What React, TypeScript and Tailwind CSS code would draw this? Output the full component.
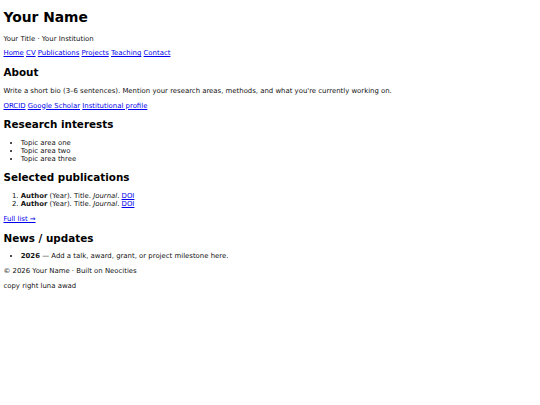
export default function App() {
  const links = ["Home", "CV", "Publications", "Projects", "Teaching", "Contact"];
  const profiles = ["ORCID", "Google Scholar", "Institutional profile"];
  const topics = ["Topic area one", "Topic area two", "Topic area three"];

  return (
    <div className="m-[3.46px] font-['DejaVu_Sans',sans-serif] text-[6.92px] leading-[normal] text-[#111] bg-white">
      <header>
        <h1 className="text-[13.84px] font-bold my-[9.27px] text-black">Your Name</h1>
        <p className="my-[6.92px]">Your Title · Your Institution</p>
        <nav className="my-[6.92px]">
          {links.map((l, i) => (
            <span key={l}>
              <a href="#" className="text-[#0000ee] underline">{l}</a>
              {i < links.length - 1 ? " " : ""}
            </span>
          ))}
        </nav>
      </header>

      <main>
        {/* About */}
        <section>
          <h2 className="text-[10.38px] font-bold my-[8.62px] text-black">About</h2>
          <p className="my-[6.92px]">
            Write a short bio (3–6 sentences). Mention your research areas, methods, and what you're currently working on.
          </p>
          <p className="my-[6.92px]">
            {profiles.map((l, i) => (
              <span key={l}>
                <a href="#" className="text-[#0000ee] underline">{l}</a>
                {i < profiles.length - 1 ? " " : ""}
              </span>
            ))}
          </p>
        </section>

        {/* Research */}
        <section>
          <h2 className="text-[10.38px] font-bold my-[8.62px] text-black">Research interests</h2>
          <ul className="list-disc pl-[17.3px] my-[6.92px]">
            {topics.map((t) => (
              <li key={t}>{t}</li>
            ))}
          </ul>
        </section>

        {/* Publications */}
        <section>
          <h2 className="text-[10.38px] font-bold my-[8.62px] text-black">Selected publications</h2>
          <ol className="list-decimal pl-[17.3px] my-[6.92px]">
            {[1, 2].map((n) => (
              <li key={n}>
                <strong>Author</strong> (Year). Title. <em>Journal</em>.{" "}
                <a href="#" className="text-[#0000ee] underline">DOI</a>
              </li>
            ))}
          </ol>
          <p className="my-[6.92px]">
            <a href="#" className="text-[#0000ee] underline">Full list →</a>
          </p>
        </section>

        {/* News */}
        <section>
          <h2 className="text-[10.38px] font-bold my-[8.62px] text-black">News / updates</h2>
          <ul className="list-disc pl-[17.3px] my-[6.92px]">
            <li>
              <strong>2026</strong> — Add a talk, award, grant, or project milestone here.
            </li>
          </ul>
        </section>
      </main>

      <footer>
        <p className="my-[6.92px]">© 2026 Your Name · Built on Neocities</p>
      </footer>
      <p className="my-[6.92px]">copy right luna awad</p>
    </div>
  );
}
